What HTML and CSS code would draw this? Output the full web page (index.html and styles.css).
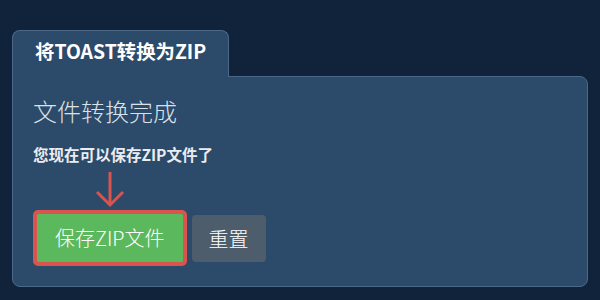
FILE: index.html
```html
<!DOCTYPE html>
<html lang="zh-CN">
<head>
    <meta charset="UTF-8">
    <meta name="viewport" content="width=device-width, initial-scale=1.0">
    <title>将TOAST转换为ZIP</title>
    <link rel="stylesheet" href="styles.css">
</head>
<body>
    <div class="converter">
        <ul class="tabs">
            <li class="tab active">将TOAST转换为ZIP</li>
        </ul>

        <div class="panel">
            <h2 class="panel-title">文件转换完成</h2>
            <p class="panel-text">您现在可以保存ZIP文件了</p>

            <div class="actions">
                <div class="pointer">
                    <!-- arrow pointing at the save button -->
                    <svg class="arrow" width="32" height="38" viewBox="0 0 32 38">
                        <line x1="16" y1="2" x2="16" y2="35" />
                        <polyline points="3,22 16,35 29,22" />
                    </svg>
                    <div class="highlight">
                        <button type="button" class="btn btn-success">保存ZIP文件</button>
                    </div>
                </div>
                <button type="button" class="btn btn-secondary">重置</button>
            </div>
        </div>
    </div>
</body>
</html>
```

FILE: styles.css
```css
body {
    margin: 0;
    padding: 30px 12px 13px 12px;
    background-color: #10233a;
    color: #e6ebf0;
    font-family: "Noto Sans CJK SC", sans-serif;
}

.tabs {
    display: flex;
    list-style: none;
    margin: 0;
    padding: 0;
}

.tab {
    position: relative;
    margin-bottom: -1px;
    padding: 8px 22px 14px 22px;
    background-color: #2c4a6a;
    border: 1px solid #4c6888;
    border-bottom: none;
    border-radius: 8px 8px 0 0;
    color: #fff;
    font-size: 19.4px;
    font-weight: bold;
    line-height: 24px;
}

.panel {
    background-color: #2c4a6a;
    border: 1px solid #4c6888;
    border-radius: 0 8px 8px 8px;
    padding: 19px 20px 20px 20px;
}

.panel-title {
    margin: 0 0 18px 0;
    font-size: 24px;
    font-weight: 300;
    line-height: 30px;
    color: #dbe1e8;
}

.panel-text {
    margin: 0 0 6px 0;
    font-size: 15.5px;
    font-weight: bold;
    line-height: 20px;
    color: #e9edf1;
}

.actions {
    display: flex;
    align-items: flex-end;
}

.pointer {
    display: flex;
    flex-direction: column;
    align-items: center;
}

.arrow {
    display: block;
    margin-bottom: 2px;
}

.arrow line,
.arrow polyline {
    fill: none;
    stroke: #d9534f;
    stroke-width: 3;
}

.highlight {
    border: 4px solid #d9534f;
    border-radius: 5px;
}

.btn {
    display: block;
    padding: 12px 18px;
    border: none;
    border-radius: 3px;
    color: #fff;
    font-family: inherit;
    font-size: 20px;
    font-weight: 300;
    line-height: 24px;
    cursor: pointer;
}

.btn-success {
    background-color: #5cb85c;
    border-radius: 1px;
}

.btn-secondary {
    margin: 0 0 4px 5px;
    padding: 12px 17px 11px 17px;
    background-color: #4e5d6c;
    border-radius: 4px;
}
```
